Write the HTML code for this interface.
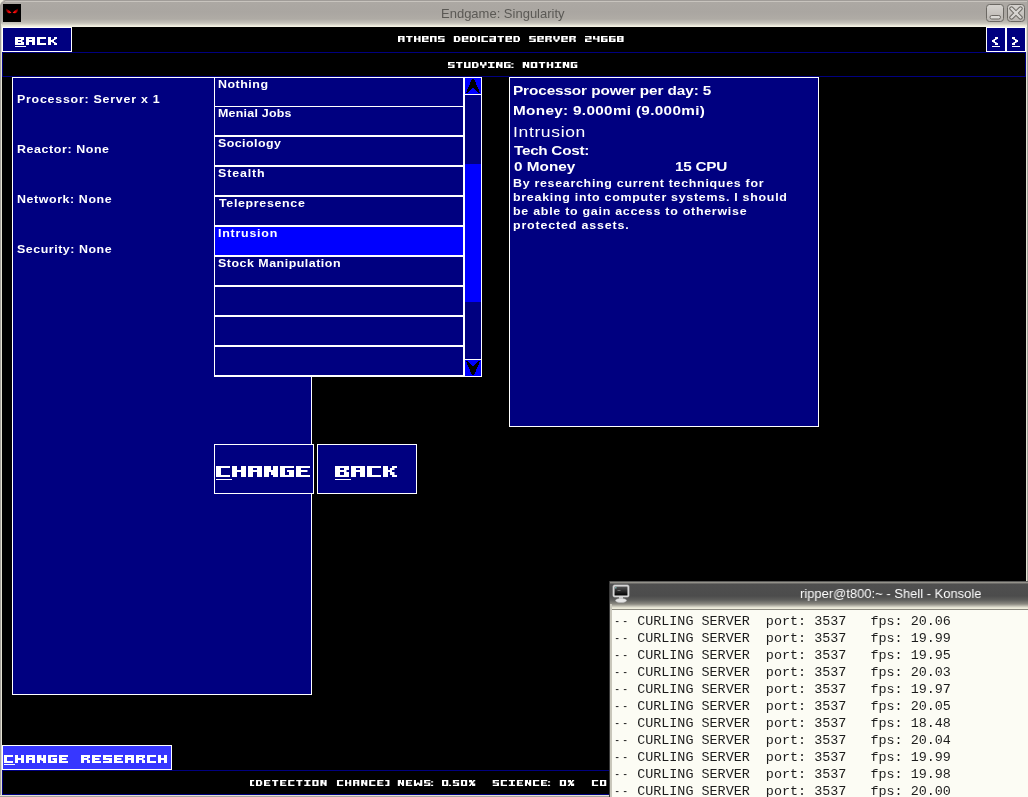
<!DOCTYPE html><html><head><meta charset="utf-8"><style>
html,body{margin:0;padding:0;}
body{width:1028px;height:797px;position:relative;overflow:hidden;background:#000;}
.a{position:absolute;}
.dsh{display:inline-block;transform:scaleX(0.72);}
.t{position:absolute;white-space:pre;line-height:1;transform-origin:0 0;will-change:transform;}
</style></head><body>
<div class="a" style="left:0px;top:0px;width:1028px;height:797px;background:#aba7a1;box-sizing:border-box;"></div>
<div class="a" style="left:0;top:0;width:1028px;height:27px;background:linear-gradient(#aca8a3 2px,#aaa6a1 12px,#afaba5 19px,#c4c1b9 23px,#dfddd0 25px,#f2f0e2 26px,#f2f0e2 27px)"></div>
<div class="a" style="left:0;top:0;width:1028px;height:1px;background:#a09c98"></div>
<div class="a" style="left:0;top:1px;width:1028px;height:1px;background:#c8c4be"></div>
<div class="a" style="left:0;top:0;width:1px;height:797px;background:#a4a19b"></div>
<div class="a" style="left:1px;top:24px;width:1px;height:773px;background:#e4e2d4"></div>
<div class="a" style="left:1026px;top:27px;width:1px;height:770px;background:#e4e2d4"></div>
<div class="a" style="left:1027px;top:0;width:1px;height:797px;background:#a4a19b"></div>
<div class="a" style="left:0;top:795px;width:1028px;height:1px;background:#e4e2d4"></div>
<div class="a" style="left:0;top:796px;width:1028px;height:1px;background:#a4a19b"></div>
<svg class="a" style="left:0;top:0" width="6" height="6" viewBox="0 0 6 6"><path d="M0 0 H5.2 Q1.2 0.8 0 5.2 Z" fill="#f1efe1"/><path d="M5.2 1.1 Q1.6 1.7 1.1 5.5" fill="none" stroke="#a9a59f" stroke-width="1"/></svg>
<svg class="a" style="left:3px;top:4px" width="18" height="18" viewBox="0 0 18 18">
<defs><radialGradient id="eyeL" gradientUnits="userSpaceOnUse" cx="7.2" cy="8.6" r="5.5"><stop offset="0" stop-color="#ff1a1a"/><stop offset="0.35" stop-color="#e00000"/><stop offset="0.75" stop-color="#800000"/><stop offset="1" stop-color="#300000"/></radialGradient>
<radialGradient id="eyeR" gradientUnits="userSpaceOnUse" cx="10.9" cy="8.6" r="5.5"><stop offset="0" stop-color="#ff1a1a"/><stop offset="0.35" stop-color="#e00000"/><stop offset="0.75" stop-color="#800000"/><stop offset="1" stop-color="#300000"/></radialGradient>
<filter id="bl" x="-50%" y="-50%" width="200%" height="200%"><feGaussianBlur stdDeviation="0.45"/></filter></defs>
<rect width="18" height="18" fill="#000"/>
<g filter="url(#bl)">
<path d="M2.9 4.2 C4.6 5.2 7 7.2 8.5 8.6 C7.9 9.4 6 9.4 4.8 8.7 C3.5 7.7 2.9 6.2 2.9 4.2 Z" fill="url(#eyeL)"/>
<path d="M15.2 4.2 C13.5 5.2 11.1 7.2 9.6 8.6 C10.2 9.4 12.1 9.4 13.3 8.7 C14.6 7.7 15.2 6.2 15.2 4.2 Z" fill="url(#eyeR)"/>
</g>
</svg>
<svg class="a" style="left:985px;top:3px" width="42" height="21" viewBox="0 0 42 21">
<defs><linearGradient id="bg" x1="0" y1="0" x2="0" y2="1"><stop offset="0" stop-color="#d6d3cf"/><stop offset="1" stop-color="#b9b5b0"/></linearGradient></defs>
<rect x="1.5" y="1.5" width="17" height="17" rx="3" fill="url(#bg)" stroke="#6b6863" stroke-width="1"/>
<rect x="5" y="12.5" width="10.5" height="3.5" rx="1.7" fill="#dcdad6" stroke="#6b6863" stroke-width="1"/>
<rect x="22.5" y="1.5" width="17" height="17" rx="3" fill="url(#bg)" stroke="#6b6863" stroke-width="1"/>
<path d="M26.5 5.5 L35.5 14.5 M35.5 5.5 L26.5 14.5" stroke="#6b6863" stroke-width="4.4" stroke-linecap="round"/>
<path d="M26.5 5.5 L35.5 14.5 M35.5 5.5 L26.5 14.5" stroke="#d8d6d2" stroke-width="2.4" stroke-linecap="round"/>
</svg>
<div class="a" style="left:2px;top:27px;width:1024px;height:768px;background:#000;box-sizing:border-box;"></div>
<div class="a" style="left:2px;top:27px;width:70px;height:25px;background:#000080;border:1px solid #fff;box-sizing:border-box;"></div>
<div class="a" style="left:2px;top:52px;width:1024px;height:25px;background:#000;border:1px solid #000080;box-sizing:border-box;"></div>
<div class="a" style="left:986px;top:27px;width:20px;height:25px;background:#000080;border:1px solid #fff;box-sizing:border-box;"></div>
<div class="a" style="left:1006px;top:27px;width:20px;height:25px;background:#000080;border:1px solid #fff;box-sizing:border-box;"></div>
<div class="a" style="left:12px;top:77px;width:300px;height:618px;background:#000080;border:1px solid #fff;box-sizing:border-box;"></div>
<div class="a" style="left:509px;top:77px;width:310px;height:350px;background:#000080;border:1px solid #fff;box-sizing:border-box;"></div>
<div class="a" style="left:214px;top:77px;width:250px;height:300px;background:#000080;box-sizing:border-box;"></div>
<div class="a" style="left:215px;top:227px;width:248px;height:28px;background:#0000ff"></div>
<div class="a" style="left:214px;top:77px;width:250px;height:1px;background:#fff"></div>
<div class="a" style="left:214px;top:106px;width:250px;height:1px;background:#fff"></div>
<div class="a" style="left:214px;top:135px;width:250px;height:2px;background:#fff"></div>
<div class="a" style="left:214px;top:165px;width:250px;height:2px;background:#fff"></div>
<div class="a" style="left:214px;top:195px;width:250px;height:2px;background:#fff"></div>
<div class="a" style="left:214px;top:225px;width:250px;height:2px;background:#fff"></div>
<div class="a" style="left:214px;top:255px;width:250px;height:2px;background:#fff"></div>
<div class="a" style="left:214px;top:285px;width:250px;height:2px;background:#fff"></div>
<div class="a" style="left:214px;top:315px;width:250px;height:2px;background:#fff"></div>
<div class="a" style="left:214px;top:345px;width:250px;height:2px;background:#fff"></div>
<div class="a" style="left:214px;top:375px;width:250px;height:2px;background:#fff"></div>
<div class="a" style="left:214px;top:77px;width:1px;height:300px;background:#fff"></div>
<div class="a" style="left:463px;top:77px;width:1px;height:300px;background:#fff"></div>
<div class="a" style="left:464px;top:77px;width:18px;height:300px;background:#000080;border:1px solid #fff;box-sizing:border-box;"></div>
<div class="a" style="left:465px;top:78px;width:16px;height:16px;background:#0000ff"></div>
<div class="a" style="left:465px;top:94px;width:16px;height:1px;background:#fff"></div>
<div class="a" style="left:465px;top:164px;width:16px;height:138px;background:#0000ff"></div>
<div class="a" style="left:465px;top:359px;width:16px;height:1px;background:#fff"></div>
<div class="a" style="left:465px;top:360px;width:16px;height:16px;background:#0000ff"></div>
<svg class="a" style="left:465px;top:78px" width="16" height="16" viewBox="0 0 16 16"><path d="M7 1 L9 1 L15 14.8 L13 14.8 L8 9.7 L3 14.8 L1 14.8 Z" fill="#000" shape-rendering="crispEdges"/></svg>
<svg class="a" style="left:465px;top:360px" width="16" height="16" viewBox="0 0 16 16"><path d="M1 1.2 L3 1.2 L8 6.3 L13 1.2 L15 1.2 L9 15 L7 15 Z" fill="#000" shape-rendering="crispEdges"/></svg>
<div class="a" style="left:214px;top:444px;width:100px;height:50px;background:#000080;border:1px solid #fff;box-sizing:border-box;"></div>
<div class="a" style="left:317px;top:444px;width:100px;height:50px;background:#000080;border:1px solid #fff;box-sizing:border-box;"></div>
<div class="a" style="left:2px;top:745px;width:170px;height:25px;background:#3737ff;border:1px solid #fff;box-sizing:border-box;"></div>
<div class="a" style="left:2px;top:770px;width:1024px;height:25px;background:#000;border:1px solid #000080;box-sizing:border-box;"></div>
<div class="a" style="left:15px;top:46px;width:11px;height:1px;background:#fff"></div>
<div class="a" style="left:992px;top:46px;width:8px;height:1px;background:#fff"></div>
<div class="a" style="left:1012px;top:46px;width:8px;height:1px;background:#fff"></div>
<div class="a" style="left:216px;top:479px;width:16px;height:1px;background:#fff"></div>
<div class="a" style="left:335px;top:479px;width:16px;height:1px;background:#fff"></div>
<div class="a" style="left:4px;top:764px;width:11px;height:1px;background:#fff"></div>
<svg class="a" style="left:0;top:0" width="1028" height="797" viewBox="0 0 1028 797"><path d="M15.00 37.00h9.00v2.00h-9.00zM15.00 39.00h3.00v1.00h-3.00zM21.00 39.00h3.00v1.00h-3.00zM15.00 40.00h7.50v2.00h-7.50zM15.00 42.00h3.00v1.00h-3.00zM21.00 42.00h3.00v1.00h-3.00zM15.00 43.00h9.00v2.00h-9.00zM26.00 37.00h9.00v2.00h-9.00zM26.00 39.00h3.00v1.00h-3.00zM32.00 39.00h3.00v1.00h-3.00zM26.00 40.00h9.00v2.00h-9.00zM26.00 42.00h3.00v1.00h-3.00zM32.00 42.00h3.00v1.00h-3.00zM26.00 43.00h3.00v2.00h-3.00zM32.00 43.00h3.00v2.00h-3.00zM37.00 37.00h9.00v2.00h-9.00zM37.00 39.00h3.00v1.00h-3.00zM37.00 40.00h3.00v2.00h-3.00zM37.00 42.00h3.00v1.00h-3.00zM37.00 43.00h9.00v2.00h-9.00zM48.00 37.00h3.00v2.00h-3.00zM54.00 37.00h3.00v2.00h-3.00zM48.00 39.00h3.00v1.00h-3.00zM52.50 39.00h3.00v1.00h-3.00zM48.00 40.00h6.00v2.00h-6.00zM48.00 42.00h3.00v1.00h-3.00zM52.50 42.00h3.00v1.00h-3.00zM48.00 43.00h3.00v2.00h-3.00zM54.00 43.00h3.00v2.00h-3.00z" fill="#fff"/><path d="M398.00 36.00h6.60v1.20h-6.60zM398.00 37.20h2.20v1.30h-2.20zM402.40 37.20h2.20v1.30h-2.20zM398.00 38.50h6.60v1.00h-6.60zM398.00 39.50h2.20v1.30h-2.20zM402.40 39.50h2.20v1.30h-2.20zM398.00 40.80h2.20v1.20h-2.20zM402.40 40.80h2.20v1.20h-2.20zM406.00 36.00h6.60v1.20h-6.60zM408.20 37.20h2.20v1.30h-2.20zM408.20 38.50h2.20v1.00h-2.20zM408.20 39.50h2.20v1.30h-2.20zM408.20 40.80h2.20v1.20h-2.20zM414.00 36.00h2.20v1.20h-2.20zM418.40 36.00h2.20v1.20h-2.20zM414.00 37.20h2.20v1.30h-2.20zM418.40 37.20h2.20v1.30h-2.20zM414.00 38.50h6.60v1.00h-6.60zM414.00 39.50h2.20v1.30h-2.20zM418.40 39.50h2.20v1.30h-2.20zM414.00 40.80h2.20v1.20h-2.20zM418.40 40.80h2.20v1.20h-2.20zM422.00 36.00h6.60v1.20h-6.60zM422.00 37.20h2.20v1.30h-2.20zM426.40 37.20h2.20v1.30h-2.20zM422.00 38.50h6.60v1.00h-6.60zM422.00 39.50h2.20v1.30h-2.20zM422.00 40.80h6.60v1.20h-6.60zM430.00 36.00h6.60v1.20h-6.60zM430.00 37.20h2.20v1.30h-2.20zM434.40 37.20h2.20v1.30h-2.20zM430.00 38.50h2.20v1.00h-2.20zM434.40 38.50h2.20v1.00h-2.20zM430.00 39.50h2.20v1.30h-2.20zM434.40 39.50h2.20v1.30h-2.20zM430.00 40.80h2.20v1.20h-2.20zM434.40 40.80h2.20v1.20h-2.20zM438.00 36.00h6.60v1.20h-6.60zM438.00 37.20h2.20v1.30h-2.20zM438.00 38.50h6.60v1.00h-6.60zM442.40 39.50h2.20v1.30h-2.20zM438.00 40.80h6.60v1.20h-6.60zM453.80 36.00h5.50v1.20h-5.50zM453.80 37.20h2.20v1.30h-2.20zM458.20 37.20h2.20v1.30h-2.20zM453.80 38.50h2.20v1.00h-2.20zM458.20 38.50h2.20v1.00h-2.20zM453.80 39.50h2.20v1.30h-2.20zM458.20 39.50h2.20v1.30h-2.20zM453.80 40.80h5.50v1.20h-5.50zM461.80 36.00h6.60v1.20h-6.60zM461.80 37.20h2.20v1.30h-2.20zM466.20 37.20h2.20v1.30h-2.20zM461.80 38.50h6.60v1.00h-6.60zM461.80 39.50h2.20v1.30h-2.20zM461.80 40.80h6.60v1.20h-6.60zM469.80 36.00h5.50v1.20h-5.50zM469.80 37.20h2.20v1.30h-2.20zM474.20 37.20h2.20v1.30h-2.20zM469.80 38.50h2.20v1.00h-2.20zM474.20 38.50h2.20v1.00h-2.20zM469.80 39.50h2.20v1.30h-2.20zM474.20 39.50h2.20v1.30h-2.20zM469.80 40.80h5.50v1.20h-5.50zM477.80 36.00h2.20v1.20h-2.20zM477.80 37.20h2.20v1.30h-2.20zM477.80 38.50h2.20v1.00h-2.20zM477.80 39.50h2.20v1.30h-2.20zM477.80 40.80h2.20v1.20h-2.20zM481.40 36.00h6.60v1.20h-6.60zM481.40 37.20h2.20v1.30h-2.20zM481.40 38.50h2.20v1.00h-2.20zM481.40 39.50h2.20v1.30h-2.20zM481.40 40.80h6.60v1.20h-6.60zM489.40 36.00h6.60v1.20h-6.60zM493.80 37.20h2.20v1.30h-2.20zM489.40 38.50h6.60v1.00h-6.60zM489.40 39.50h2.20v1.30h-2.20zM493.80 39.50h2.20v1.30h-2.20zM489.40 40.80h6.60v1.20h-6.60zM497.40 36.00h6.60v1.20h-6.60zM499.60 37.20h2.20v1.30h-2.20zM499.60 38.50h2.20v1.00h-2.20zM499.60 39.50h2.20v1.30h-2.20zM499.60 40.80h2.20v1.20h-2.20zM505.40 36.00h6.60v1.20h-6.60zM505.40 37.20h2.20v1.30h-2.20zM509.80 37.20h2.20v1.30h-2.20zM505.40 38.50h6.60v1.00h-6.60zM505.40 39.50h2.20v1.30h-2.20zM505.40 40.80h6.60v1.20h-6.60zM513.40 36.00h5.50v1.20h-5.50zM513.40 37.20h2.20v1.30h-2.20zM517.80 37.20h2.20v1.30h-2.20zM513.40 38.50h2.20v1.00h-2.20zM517.80 38.50h2.20v1.00h-2.20zM513.40 39.50h2.20v1.30h-2.20zM517.80 39.50h2.20v1.30h-2.20zM513.40 40.80h5.50v1.20h-5.50zM529.20 36.00h6.60v1.20h-6.60zM529.20 37.20h2.20v1.30h-2.20zM529.20 38.50h6.60v1.00h-6.60zM533.60 39.50h2.20v1.30h-2.20zM529.20 40.80h6.60v1.20h-6.60zM537.20 36.00h6.60v1.20h-6.60zM537.20 37.20h2.20v1.30h-2.20zM541.60 37.20h2.20v1.30h-2.20zM537.20 38.50h6.60v1.00h-6.60zM537.20 39.50h2.20v1.30h-2.20zM537.20 40.80h6.60v1.20h-6.60zM545.20 36.00h6.60v1.20h-6.60zM545.20 37.20h2.20v1.30h-2.20zM549.60 37.20h2.20v1.30h-2.20zM545.20 38.50h5.50v1.00h-5.50zM545.20 39.50h2.20v1.30h-2.20zM549.60 39.50h2.20v1.30h-2.20zM545.20 40.80h2.20v1.20h-2.20zM549.60 40.80h2.20v1.20h-2.20zM553.20 36.00h2.20v1.20h-2.20zM557.60 36.00h2.20v1.20h-2.20zM553.20 37.20h2.20v1.30h-2.20zM557.60 37.20h2.20v1.30h-2.20zM553.20 38.50h2.20v1.00h-2.20zM557.60 38.50h2.20v1.00h-2.20zM554.30 39.50h4.40v1.30h-4.40zM555.40 40.80h2.20v1.20h-2.20zM561.20 36.00h6.60v1.20h-6.60zM561.20 37.20h2.20v1.30h-2.20zM565.60 37.20h2.20v1.30h-2.20zM561.20 38.50h6.60v1.00h-6.60zM561.20 39.50h2.20v1.30h-2.20zM561.20 40.80h6.60v1.20h-6.60zM569.20 36.00h6.60v1.20h-6.60zM569.20 37.20h2.20v1.30h-2.20zM573.60 37.20h2.20v1.30h-2.20zM569.20 38.50h5.50v1.00h-5.50zM569.20 39.50h2.20v1.30h-2.20zM573.60 39.50h2.20v1.30h-2.20zM569.20 40.80h2.20v1.20h-2.20zM573.60 40.80h2.20v1.20h-2.20zM585.00 36.00h6.60v1.20h-6.60zM589.40 37.20h2.20v1.30h-2.20zM585.00 38.50h6.60v1.00h-6.60zM585.00 39.50h2.20v1.30h-2.20zM585.00 40.80h6.60v1.20h-6.60zM593.00 36.00h2.20v1.20h-2.20zM597.40 36.00h2.20v1.20h-2.20zM593.00 37.20h2.20v1.30h-2.20zM597.40 37.20h2.20v1.30h-2.20zM593.00 38.50h6.60v1.00h-6.60zM597.40 39.50h2.20v1.30h-2.20zM597.40 40.80h2.20v1.20h-2.20zM601.00 36.00h6.60v1.20h-6.60zM601.00 37.20h2.20v1.30h-2.20zM601.00 38.50h6.60v1.00h-6.60zM601.00 39.50h2.20v1.30h-2.20zM605.40 39.50h2.20v1.30h-2.20zM601.00 40.80h6.60v1.20h-6.60zM609.00 36.00h6.60v1.20h-6.60zM609.00 37.20h2.20v1.30h-2.20zM609.00 38.50h6.60v1.00h-6.60zM609.00 39.50h2.20v1.30h-2.20zM613.40 39.50h2.20v1.30h-2.20zM609.00 40.80h6.60v1.20h-6.60zM617.00 36.00h6.60v1.20h-6.60zM617.00 37.20h2.20v1.30h-2.20zM621.40 37.20h2.20v1.30h-2.20zM617.00 38.50h6.60v1.00h-6.60zM617.00 39.50h2.20v1.30h-2.20zM621.40 39.50h2.20v1.30h-2.20zM617.00 40.80h6.60v1.20h-6.60z" fill="#fff"/><path d="M448.00 62.00h6.60v1.20h-6.60zM448.00 63.20h2.20v1.30h-2.20zM448.00 64.50h6.60v1.00h-6.60zM452.40 65.50h2.20v1.30h-2.20zM448.00 66.80h6.60v1.20h-6.60zM456.00 62.00h6.60v1.20h-6.60zM458.20 63.20h2.20v1.30h-2.20zM458.20 64.50h2.20v1.00h-2.20zM458.20 65.50h2.20v1.30h-2.20zM458.20 66.80h2.20v1.20h-2.20zM464.00 62.00h2.20v1.20h-2.20zM468.40 62.00h2.20v1.20h-2.20zM464.00 63.20h2.20v1.30h-2.20zM468.40 63.20h2.20v1.30h-2.20zM464.00 64.50h2.20v1.00h-2.20zM468.40 64.50h2.20v1.00h-2.20zM464.00 65.50h2.20v1.30h-2.20zM468.40 65.50h2.20v1.30h-2.20zM464.00 66.80h6.60v1.20h-6.60zM472.00 62.00h5.50v1.20h-5.50zM472.00 63.20h2.20v1.30h-2.20zM476.40 63.20h2.20v1.30h-2.20zM472.00 64.50h2.20v1.00h-2.20zM476.40 64.50h2.20v1.00h-2.20zM472.00 65.50h2.20v1.30h-2.20zM476.40 65.50h2.20v1.30h-2.20zM472.00 66.80h5.50v1.20h-5.50zM480.00 62.00h2.20v1.20h-2.20zM484.40 62.00h2.20v1.20h-2.20zM480.00 63.20h2.20v1.30h-2.20zM484.40 63.20h2.20v1.30h-2.20zM480.00 64.50h6.60v1.00h-6.60zM482.20 65.50h2.20v1.30h-2.20zM482.20 66.80h2.20v1.20h-2.20zM488.00 62.00h6.60v1.20h-6.60zM490.20 63.20h2.20v1.30h-2.20zM490.20 64.50h2.20v1.00h-2.20zM490.20 65.50h2.20v1.30h-2.20zM488.00 66.80h6.60v1.20h-6.60zM496.00 62.00h3.30v1.20h-3.30zM500.40 62.00h2.20v1.20h-2.20zM496.00 63.20h3.30v1.30h-3.30zM500.40 63.20h2.20v1.30h-2.20zM496.00 64.50h6.60v1.00h-6.60zM496.00 65.50h2.20v1.30h-2.20zM499.30 65.50h3.30v1.30h-3.30zM496.00 66.80h2.20v1.20h-2.20zM500.40 66.80h2.20v1.20h-2.20zM504.00 62.00h6.60v1.20h-6.60zM504.00 63.20h2.20v1.30h-2.20zM504.00 64.50h2.20v1.00h-2.20zM507.30 64.50h3.30v1.00h-3.30zM504.00 65.50h2.20v1.30h-2.20zM508.40 65.50h2.20v1.30h-2.20zM504.00 66.80h6.60v1.20h-6.60zM511.30 63.20h2.20v1.30h-2.20zM511.30 66.80h2.20v1.20h-2.20zM522.70 62.00h3.30v1.20h-3.30zM527.10 62.00h2.20v1.20h-2.20zM522.70 63.20h3.30v1.30h-3.30zM527.10 63.20h2.20v1.30h-2.20zM522.70 64.50h6.60v1.00h-6.60zM522.70 65.50h2.20v1.30h-2.20zM526.00 65.50h3.30v1.30h-3.30zM522.70 66.80h2.20v1.20h-2.20zM527.10 66.80h2.20v1.20h-2.20zM530.70 62.00h6.60v1.20h-6.60zM530.70 63.20h2.20v1.30h-2.20zM535.10 63.20h2.20v1.30h-2.20zM530.70 64.50h2.20v1.00h-2.20zM535.10 64.50h2.20v1.00h-2.20zM530.70 65.50h2.20v1.30h-2.20zM535.10 65.50h2.20v1.30h-2.20zM530.70 66.80h6.60v1.20h-6.60zM538.70 62.00h6.60v1.20h-6.60zM540.90 63.20h2.20v1.30h-2.20zM540.90 64.50h2.20v1.00h-2.20zM540.90 65.50h2.20v1.30h-2.20zM540.90 66.80h2.20v1.20h-2.20zM546.70 62.00h2.20v1.20h-2.20zM551.10 62.00h2.20v1.20h-2.20zM546.70 63.20h2.20v1.30h-2.20zM551.10 63.20h2.20v1.30h-2.20zM546.70 64.50h6.60v1.00h-6.60zM546.70 65.50h2.20v1.30h-2.20zM551.10 65.50h2.20v1.30h-2.20zM546.70 66.80h2.20v1.20h-2.20zM551.10 66.80h2.20v1.20h-2.20zM554.70 62.00h6.60v1.20h-6.60zM556.90 63.20h2.20v1.30h-2.20zM556.90 64.50h2.20v1.00h-2.20zM556.90 65.50h2.20v1.30h-2.20zM554.70 66.80h6.60v1.20h-6.60zM562.70 62.00h3.30v1.20h-3.30zM567.10 62.00h2.20v1.20h-2.20zM562.70 63.20h3.30v1.30h-3.30zM567.10 63.20h2.20v1.30h-2.20zM562.70 64.50h6.60v1.00h-6.60zM562.70 65.50h2.20v1.30h-2.20zM566.00 65.50h3.30v1.30h-3.30zM562.70 66.80h2.20v1.20h-2.20zM567.10 66.80h2.20v1.20h-2.20zM570.70 62.00h6.60v1.20h-6.60zM570.70 63.20h2.20v1.30h-2.20zM570.70 64.50h2.20v1.00h-2.20zM574.00 64.50h3.30v1.00h-3.30zM570.70 65.50h2.20v1.30h-2.20zM575.10 65.50h2.20v1.30h-2.20zM570.70 66.80h6.60v1.20h-6.60z" fill="#fff"/><path d="M995.00 37.00h3.00v2.00h-3.00zM993.50 39.00h3.00v1.00h-3.00zM992.00 40.00h3.00v2.00h-3.00zM993.50 42.00h3.00v1.00h-3.00zM995.00 43.00h3.00v2.00h-3.00z" fill="#fff"/><path d="M1012.00 37.00h3.00v2.00h-3.00zM1013.50 39.00h3.00v1.00h-3.00zM1015.00 40.00h3.00v2.00h-3.00zM1013.50 42.00h3.00v1.00h-3.00zM1012.00 43.00h3.00v2.00h-3.00z" fill="#fff"/><path d="M216.00 466.00h14.00v2.00h-14.00zM216.00 468.00h5.00v2.00h-5.00zM216.00 470.00h5.00v2.00h-5.00zM216.00 472.00h5.00v3.00h-5.00zM216.00 475.00h14.00v2.00h-14.00zM232.00 466.00h5.00v2.00h-5.00zM241.00 466.00h5.00v2.00h-5.00zM232.00 468.00h5.00v2.00h-5.00zM241.00 468.00h5.00v2.00h-5.00zM232.00 470.00h14.00v2.00h-14.00zM232.00 472.00h5.00v3.00h-5.00zM241.00 472.00h5.00v3.00h-5.00zM232.00 475.00h5.00v2.00h-5.00zM241.00 475.00h5.00v2.00h-5.00zM248.00 466.00h14.00v2.00h-14.00zM248.00 468.00h5.00v2.00h-5.00zM257.00 468.00h5.00v2.00h-5.00zM248.00 470.00h14.00v2.00h-14.00zM248.00 472.00h5.00v3.00h-5.00zM257.00 472.00h5.00v3.00h-5.00zM248.00 475.00h5.00v2.00h-5.00zM257.00 475.00h5.00v2.00h-5.00zM264.00 466.00h7.00v2.00h-7.00zM273.00 466.00h5.00v2.00h-5.00zM264.00 468.00h7.00v2.00h-7.00zM273.00 468.00h5.00v2.00h-5.00zM264.00 470.00h14.00v2.00h-14.00zM264.00 472.00h5.00v3.00h-5.00zM271.00 472.00h7.00v3.00h-7.00zM264.00 475.00h5.00v2.00h-5.00zM273.00 475.00h5.00v2.00h-5.00zM280.00 466.00h14.00v2.00h-14.00zM280.00 468.00h5.00v2.00h-5.00zM280.00 470.00h5.00v2.00h-5.00zM287.00 470.00h7.00v2.00h-7.00zM280.00 472.00h5.00v3.00h-5.00zM289.00 472.00h5.00v3.00h-5.00zM280.00 475.00h14.00v2.00h-14.00zM296.00 466.00h14.00v2.00h-14.00zM296.00 468.00h5.00v2.00h-5.00zM296.00 470.00h11.50v2.00h-11.50zM296.00 472.00h5.00v3.00h-5.00zM296.00 475.00h14.00v2.00h-14.00z" fill="#fff"/><path d="M335.00 466.00h14.00v2.00h-14.00zM335.00 468.00h5.00v2.00h-5.00zM344.00 468.00h5.00v2.00h-5.00zM335.00 470.00h11.50v2.00h-11.50zM335.00 472.00h5.00v3.00h-5.00zM344.00 472.00h5.00v3.00h-5.00zM335.00 475.00h14.00v2.00h-14.00zM351.00 466.00h14.00v2.00h-14.00zM351.00 468.00h5.00v2.00h-5.00zM360.00 468.00h5.00v2.00h-5.00zM351.00 470.00h14.00v2.00h-14.00zM351.00 472.00h5.00v3.00h-5.00zM360.00 472.00h5.00v3.00h-5.00zM351.00 475.00h5.00v2.00h-5.00zM360.00 475.00h5.00v2.00h-5.00zM367.00 466.00h14.00v2.00h-14.00zM367.00 468.00h5.00v2.00h-5.00zM367.00 470.00h5.00v2.00h-5.00zM367.00 472.00h5.00v3.00h-5.00zM367.00 475.00h14.00v2.00h-14.00zM383.00 466.00h5.00v2.00h-5.00zM392.00 466.00h5.00v2.00h-5.00zM383.00 468.00h5.00v2.00h-5.00zM390.00 468.00h4.50v2.00h-4.50zM383.00 470.00h9.00v2.00h-9.00zM383.00 472.00h5.00v3.00h-5.00zM390.00 472.00h4.50v3.00h-4.50zM383.00 475.00h5.00v2.00h-5.00zM392.00 475.00h5.00v2.00h-5.00z" fill="#fff"/><path d="M4.00 755.00h9.00v2.00h-9.00zM4.00 757.00h3.00v1.00h-3.00zM4.00 758.00h3.00v2.00h-3.00zM4.00 760.00h3.00v1.00h-3.00zM4.00 761.00h9.00v2.00h-9.00zM15.00 755.00h3.00v2.00h-3.00zM21.00 755.00h3.00v2.00h-3.00zM15.00 757.00h3.00v1.00h-3.00zM21.00 757.00h3.00v1.00h-3.00zM15.00 758.00h9.00v2.00h-9.00zM15.00 760.00h3.00v1.00h-3.00zM21.00 760.00h3.00v1.00h-3.00zM15.00 761.00h3.00v2.00h-3.00zM21.00 761.00h3.00v2.00h-3.00zM26.00 755.00h9.00v2.00h-9.00zM26.00 757.00h3.00v1.00h-3.00zM32.00 757.00h3.00v1.00h-3.00zM26.00 758.00h9.00v2.00h-9.00zM26.00 760.00h3.00v1.00h-3.00zM32.00 760.00h3.00v1.00h-3.00zM26.00 761.00h3.00v2.00h-3.00zM32.00 761.00h3.00v2.00h-3.00zM37.00 755.00h4.50v2.00h-4.50zM43.00 755.00h3.00v2.00h-3.00zM37.00 757.00h4.50v1.00h-4.50zM43.00 757.00h3.00v1.00h-3.00zM37.00 758.00h9.00v2.00h-9.00zM37.00 760.00h3.00v1.00h-3.00zM41.50 760.00h4.50v1.00h-4.50zM37.00 761.00h3.00v2.00h-3.00zM43.00 761.00h3.00v2.00h-3.00zM48.00 755.00h9.00v2.00h-9.00zM48.00 757.00h3.00v1.00h-3.00zM48.00 758.00h3.00v2.00h-3.00zM52.50 758.00h4.50v2.00h-4.50zM48.00 760.00h3.00v1.00h-3.00zM54.00 760.00h3.00v1.00h-3.00zM48.00 761.00h9.00v2.00h-9.00zM59.00 755.00h9.00v2.00h-9.00zM59.00 757.00h3.00v1.00h-3.00zM59.00 758.00h7.50v2.00h-7.50zM59.00 760.00h3.00v1.00h-3.00zM59.00 761.00h9.00v2.00h-9.00zM81.00 755.00h9.00v2.00h-9.00zM81.00 757.00h3.00v1.00h-3.00zM87.00 757.00h3.00v1.00h-3.00zM81.00 758.00h7.50v2.00h-7.50zM81.00 760.00h3.00v1.00h-3.00zM87.00 760.00h3.00v1.00h-3.00zM81.00 761.00h3.00v2.00h-3.00zM87.00 761.00h3.00v2.00h-3.00zM92.00 755.00h9.00v2.00h-9.00zM92.00 757.00h3.00v1.00h-3.00zM92.00 758.00h7.50v2.00h-7.50zM92.00 760.00h3.00v1.00h-3.00zM92.00 761.00h9.00v2.00h-9.00zM103.00 755.00h9.00v2.00h-9.00zM103.00 757.00h3.00v1.00h-3.00zM103.00 758.00h9.00v2.00h-9.00zM109.00 760.00h3.00v1.00h-3.00zM103.00 761.00h9.00v2.00h-9.00zM114.00 755.00h9.00v2.00h-9.00zM114.00 757.00h3.00v1.00h-3.00zM114.00 758.00h7.50v2.00h-7.50zM114.00 760.00h3.00v1.00h-3.00zM114.00 761.00h9.00v2.00h-9.00zM125.00 755.00h9.00v2.00h-9.00zM125.00 757.00h3.00v1.00h-3.00zM131.00 757.00h3.00v1.00h-3.00zM125.00 758.00h9.00v2.00h-9.00zM125.00 760.00h3.00v1.00h-3.00zM131.00 760.00h3.00v1.00h-3.00zM125.00 761.00h3.00v2.00h-3.00zM131.00 761.00h3.00v2.00h-3.00zM136.00 755.00h9.00v2.00h-9.00zM136.00 757.00h3.00v1.00h-3.00zM142.00 757.00h3.00v1.00h-3.00zM136.00 758.00h7.50v2.00h-7.50zM136.00 760.00h3.00v1.00h-3.00zM142.00 760.00h3.00v1.00h-3.00zM136.00 761.00h3.00v2.00h-3.00zM142.00 761.00h3.00v2.00h-3.00zM147.00 755.00h9.00v2.00h-9.00zM147.00 757.00h3.00v1.00h-3.00zM147.00 758.00h3.00v2.00h-3.00zM147.00 760.00h3.00v1.00h-3.00zM147.00 761.00h9.00v2.00h-9.00zM158.00 755.00h3.00v2.00h-3.00zM164.00 755.00h3.00v2.00h-3.00zM158.00 757.00h3.00v1.00h-3.00zM164.00 757.00h3.00v1.00h-3.00zM158.00 758.00h9.00v2.00h-9.00zM158.00 760.00h3.00v1.00h-3.00zM164.00 760.00h3.00v1.00h-3.00zM158.00 761.00h3.00v2.00h-3.00zM164.00 761.00h3.00v2.00h-3.00z" fill="#fff"/><path d="M250.00 780.00h4.20v1.20h-4.20zM250.00 781.20h2.10v1.30h-2.10zM250.00 782.50h2.10v1.00h-2.10zM250.00 783.50h2.10v1.30h-2.10zM250.00 784.80h4.20v1.20h-4.20zM255.95 780.00h5.25v1.20h-5.25zM255.95 781.20h2.10v1.30h-2.10zM260.15 781.20h2.10v1.30h-2.10zM255.95 782.50h2.10v1.00h-2.10zM260.15 782.50h2.10v1.00h-2.10zM255.95 783.50h2.10v1.30h-2.10zM260.15 783.50h2.10v1.30h-2.10zM255.95 784.80h5.25v1.20h-5.25zM264.00 780.00h6.30v1.20h-6.30zM264.00 781.20h2.10v1.30h-2.10zM264.00 782.50h5.25v1.00h-5.25zM264.00 783.50h2.10v1.30h-2.10zM264.00 784.80h6.30v1.20h-6.30zM272.05 780.00h6.30v1.20h-6.30zM274.15 781.20h2.10v1.30h-2.10zM274.15 782.50h2.10v1.00h-2.10zM274.15 783.50h2.10v1.30h-2.10zM274.15 784.80h2.10v1.20h-2.10zM280.10 780.00h6.30v1.20h-6.30zM280.10 781.20h2.10v1.30h-2.10zM280.10 782.50h5.25v1.00h-5.25zM280.10 783.50h2.10v1.30h-2.10zM280.10 784.80h6.30v1.20h-6.30zM288.15 780.00h6.30v1.20h-6.30zM288.15 781.20h2.10v1.30h-2.10zM288.15 782.50h2.10v1.00h-2.10zM288.15 783.50h2.10v1.30h-2.10zM288.15 784.80h6.30v1.20h-6.30zM296.20 780.00h6.30v1.20h-6.30zM298.30 781.20h2.10v1.30h-2.10zM298.30 782.50h2.10v1.00h-2.10zM298.30 783.50h2.10v1.30h-2.10zM298.30 784.80h2.10v1.20h-2.10zM304.25 780.00h6.30v1.20h-6.30zM306.35 781.20h2.10v1.30h-2.10zM306.35 782.50h2.10v1.00h-2.10zM306.35 783.50h2.10v1.30h-2.10zM304.25 784.80h6.30v1.20h-6.30zM312.30 780.00h6.30v1.20h-6.30zM312.30 781.20h2.10v1.30h-2.10zM316.50 781.20h2.10v1.30h-2.10zM312.30 782.50h2.10v1.00h-2.10zM316.50 782.50h2.10v1.00h-2.10zM312.30 783.50h2.10v1.30h-2.10zM316.50 783.50h2.10v1.30h-2.10zM312.30 784.80h6.30v1.20h-6.30zM320.35 780.00h3.15v1.20h-3.15zM324.55 780.00h2.10v1.20h-2.10zM320.35 781.20h3.15v1.30h-3.15zM324.55 781.20h2.10v1.30h-2.10zM320.35 782.50h6.30v1.00h-6.30zM320.35 783.50h2.10v1.30h-2.10zM323.50 783.50h3.15v1.30h-3.15zM320.35 784.80h2.10v1.20h-2.10zM324.55 784.80h2.10v1.20h-2.10zM336.95 780.00h6.30v1.20h-6.30zM336.95 781.20h2.10v1.30h-2.10zM336.95 782.50h2.10v1.00h-2.10zM336.95 783.50h2.10v1.30h-2.10zM336.95 784.80h6.30v1.20h-6.30zM345.00 780.00h2.10v1.20h-2.10zM349.20 780.00h2.10v1.20h-2.10zM345.00 781.20h2.10v1.30h-2.10zM349.20 781.20h2.10v1.30h-2.10zM345.00 782.50h6.30v1.00h-6.30zM345.00 783.50h2.10v1.30h-2.10zM349.20 783.50h2.10v1.30h-2.10zM345.00 784.80h2.10v1.20h-2.10zM349.20 784.80h2.10v1.20h-2.10zM353.05 780.00h6.30v1.20h-6.30zM353.05 781.20h2.10v1.30h-2.10zM357.25 781.20h2.10v1.30h-2.10zM353.05 782.50h6.30v1.00h-6.30zM353.05 783.50h2.10v1.30h-2.10zM357.25 783.50h2.10v1.30h-2.10zM353.05 784.80h2.10v1.20h-2.10zM357.25 784.80h2.10v1.20h-2.10zM361.10 780.00h3.15v1.20h-3.15zM365.30 780.00h2.10v1.20h-2.10zM361.10 781.20h3.15v1.30h-3.15zM365.30 781.20h2.10v1.30h-2.10zM361.10 782.50h6.30v1.00h-6.30zM361.10 783.50h2.10v1.30h-2.10zM364.25 783.50h3.15v1.30h-3.15zM361.10 784.80h2.10v1.20h-2.10zM365.30 784.80h2.10v1.20h-2.10zM369.15 780.00h6.30v1.20h-6.30zM369.15 781.20h2.10v1.30h-2.10zM369.15 782.50h2.10v1.00h-2.10zM369.15 783.50h2.10v1.30h-2.10zM369.15 784.80h6.30v1.20h-6.30zM377.20 780.00h6.30v1.20h-6.30zM377.20 781.20h2.10v1.30h-2.10zM377.20 782.50h5.25v1.00h-5.25zM377.20 783.50h2.10v1.30h-2.10zM377.20 784.80h6.30v1.20h-6.30zM385.25 780.00h4.20v1.20h-4.20zM387.35 781.20h2.10v1.30h-2.10zM387.35 782.50h2.10v1.00h-2.10zM387.35 783.50h2.10v1.30h-2.10zM385.25 784.80h4.20v1.20h-4.20z" fill="#fff"/><path d="M397.80 780.00h3.15v1.20h-3.15zM402.00 780.00h2.10v1.20h-2.10zM397.80 781.20h3.15v1.30h-3.15zM402.00 781.20h2.10v1.30h-2.10zM397.80 782.50h6.30v1.00h-6.30zM397.80 783.50h2.10v1.30h-2.10zM400.95 783.50h3.15v1.30h-3.15zM397.80 784.80h2.10v1.20h-2.10zM402.00 784.80h2.10v1.20h-2.10zM405.85 780.00h6.30v1.20h-6.30zM405.85 781.20h2.10v1.30h-2.10zM405.85 782.50h5.25v1.00h-5.25zM405.85 783.50h2.10v1.30h-2.10zM405.85 784.80h6.30v1.20h-6.30zM413.90 780.00h2.10v1.20h-2.10zM420.20 780.00h2.10v1.20h-2.10zM413.90 781.20h2.10v1.30h-2.10zM420.20 781.20h2.10v1.30h-2.10zM413.90 782.50h2.10v1.00h-2.10zM417.05 782.50h2.10v1.00h-2.10zM420.20 782.50h2.10v1.00h-2.10zM413.90 783.50h8.40v1.30h-8.40zM413.90 784.80h3.15v1.20h-3.15zM419.15 784.80h3.15v1.20h-3.15zM424.05 780.00h6.30v1.20h-6.30zM424.05 781.20h2.10v1.30h-2.10zM424.05 782.50h6.30v1.00h-6.30zM428.25 783.50h2.10v1.30h-2.10zM424.05 784.80h6.30v1.20h-6.30zM431.05 781.20h2.10v1.30h-2.10zM431.05 784.80h2.10v1.20h-2.10z" fill="#fff"/><path d="M442.00 780.00h6.30v1.20h-6.30zM442.00 781.20h2.10v1.30h-2.10zM446.20 781.20h2.10v1.30h-2.10zM442.00 782.50h2.10v1.00h-2.10zM446.20 782.50h2.10v1.00h-2.10zM442.00 783.50h2.10v1.30h-2.10zM446.20 783.50h2.10v1.30h-2.10zM442.00 784.80h6.30v1.20h-6.30zM449.00 784.80h2.10v1.20h-2.10zM452.85 780.00h6.30v1.20h-6.30zM452.85 781.20h2.10v1.30h-2.10zM452.85 782.50h6.30v1.00h-6.30zM457.05 783.50h2.10v1.30h-2.10zM452.85 784.80h6.30v1.20h-6.30zM460.90 780.00h6.30v1.20h-6.30zM460.90 781.20h2.10v1.30h-2.10zM465.10 781.20h2.10v1.30h-2.10zM460.90 782.50h2.10v1.00h-2.10zM465.10 782.50h2.10v1.00h-2.10zM460.90 783.50h2.10v1.30h-2.10zM465.10 783.50h2.10v1.30h-2.10zM460.90 784.80h6.30v1.20h-6.30zM468.95 780.00h3.15v1.20h-3.15zM473.15 780.00h2.10v1.20h-2.10zM468.95 781.20h5.25v1.30h-5.25zM471.05 782.50h2.10v1.00h-2.10zM470.00 783.50h5.25v1.30h-5.25zM468.95 784.80h2.10v1.20h-2.10zM472.10 784.80h3.15v1.20h-3.15z" fill="#fff"/><path d="M492.70 780.00h6.30v1.20h-6.30zM492.70 781.20h2.10v1.30h-2.10zM492.70 782.50h6.30v1.00h-6.30zM496.90 783.50h2.10v1.30h-2.10zM492.70 784.80h6.30v1.20h-6.30zM500.75 780.00h6.30v1.20h-6.30zM500.75 781.20h2.10v1.30h-2.10zM500.75 782.50h2.10v1.00h-2.10zM500.75 783.50h2.10v1.30h-2.10zM500.75 784.80h6.30v1.20h-6.30zM508.80 780.00h6.30v1.20h-6.30zM510.90 781.20h2.10v1.30h-2.10zM510.90 782.50h2.10v1.00h-2.10zM510.90 783.50h2.10v1.30h-2.10zM508.80 784.80h6.30v1.20h-6.30zM516.85 780.00h6.30v1.20h-6.30zM516.85 781.20h2.10v1.30h-2.10zM516.85 782.50h5.25v1.00h-5.25zM516.85 783.50h2.10v1.30h-2.10zM516.85 784.80h6.30v1.20h-6.30zM524.90 780.00h3.15v1.20h-3.15zM529.10 780.00h2.10v1.20h-2.10zM524.90 781.20h3.15v1.30h-3.15zM529.10 781.20h2.10v1.30h-2.10zM524.90 782.50h6.30v1.00h-6.30zM524.90 783.50h2.10v1.30h-2.10zM528.05 783.50h3.15v1.30h-3.15zM524.90 784.80h2.10v1.20h-2.10zM529.10 784.80h2.10v1.20h-2.10zM532.95 780.00h6.30v1.20h-6.30zM532.95 781.20h2.10v1.30h-2.10zM532.95 782.50h2.10v1.00h-2.10zM532.95 783.50h2.10v1.30h-2.10zM532.95 784.80h6.30v1.20h-6.30zM541.00 780.00h6.30v1.20h-6.30zM541.00 781.20h2.10v1.30h-2.10zM541.00 782.50h5.25v1.00h-5.25zM541.00 783.50h2.10v1.30h-2.10zM541.00 784.80h6.30v1.20h-6.30zM548.00 781.20h2.10v1.30h-2.10zM548.00 784.80h2.10v1.20h-2.10z" fill="#fff"/><path d="M559.80 780.00h6.30v1.20h-6.30zM559.80 781.20h2.10v1.30h-2.10zM564.00 781.20h2.10v1.30h-2.10zM559.80 782.50h2.10v1.00h-2.10zM564.00 782.50h2.10v1.00h-2.10zM559.80 783.50h2.10v1.30h-2.10zM564.00 783.50h2.10v1.30h-2.10zM559.80 784.80h6.30v1.20h-6.30zM567.85 780.00h3.15v1.20h-3.15zM572.05 780.00h2.10v1.20h-2.10zM567.85 781.20h5.25v1.30h-5.25zM569.95 782.50h2.10v1.00h-2.10zM568.90 783.50h5.25v1.30h-5.25zM567.85 784.80h2.10v1.20h-2.10zM571.00 784.80h3.15v1.20h-3.15z" fill="#fff"/><path d="M591.90 780.00h6.30v1.20h-6.30zM591.90 781.20h2.10v1.30h-2.10zM591.90 782.50h2.10v1.00h-2.10zM591.90 783.50h2.10v1.30h-2.10zM591.90 784.80h6.30v1.20h-6.30zM599.95 780.00h6.30v1.20h-6.30zM599.95 781.20h2.10v1.30h-2.10zM604.15 781.20h2.10v1.30h-2.10zM599.95 782.50h2.10v1.00h-2.10zM604.15 782.50h2.10v1.00h-2.10zM599.95 783.50h2.10v1.30h-2.10zM604.15 783.50h2.10v1.30h-2.10zM599.95 784.80h6.30v1.20h-6.30z" fill="#fff"/></svg>
<div class="a" style="left:609px;top:581px;width:419px;height:216px;background:#fcfcf4"></div>
<div class="a" style="left:609px;top:581px;width:419px;height:29px;background:linear-gradient(#5a5a58 0px,#5a5a58 1px,#9c9a92 1px,#8a8882 2px,#4f4f4f 3px,#4c4c4c 15px,#5e5e5c 19px,#8a8880 23px,#d8d6c8 26px,#efeddc 27px,#efeddc 28px,#8c8a80 28px,#8c8a80 29px)"></div>
<div class="a" style="left:609px;top:581px;width:1px;height:216px;background:#3a3a3a"></div>
<div class="a" style="left:610px;top:604px;width:2px;height:193px;background:#c9c7bb"></div>
<svg class="a" style="left:612px;top:584px" width="19" height="20" viewBox="0 0 19 20">
<defs><linearGradient id="scr" x1="0" y1="0" x2="0" y2="1"><stop offset="0" stop-color="#555"/><stop offset="1" stop-color="#000"/></linearGradient></defs>
<rect x="1" y="1" width="16" height="12" rx="1.5" fill="#e8e8e8" stroke="#bdbdbd" stroke-width="0.8"/>
<rect x="2.5" y="2.5" width="13" height="9" fill="url(#scr)"/>
<rect x="3" y="3" width="1.5" height="1.5" fill="#7aa"/>
<rect x="5.5" y="6" width="3" height="0.8" fill="#888"/>
<rect x="7" y="13" width="4" height="2" fill="#d0d0d0"/>
<ellipse cx="9" cy="16.5" rx="5.5" ry="2" fill="#e6e6e6" stroke="#bbb" stroke-width="0.6"/>
</svg>
<div class="t" id="title" style="left:440.87px;top:7.16px;font-size:13px;font-weight:normal;color:#5b5955;font-family:'Liberation Sans',sans-serif;transform:scaleX(0.9972)">Endgame: Singularity</div>
<div class="t" id="lp1" style="left:16.87px;top:94.25px;font-size:11.5px;font-weight:bold;color:#fff;font-family:'Liberation Sans',sans-serif;letter-spacing:0.692px;transform:scaleX(1.0800)">Processor: Server x 1</div>
<div class="t" id="lp2" style="left:16.97px;top:143.87px;font-size:11.5px;font-weight:bold;color:#fff;font-family:'Liberation Sans',sans-serif;letter-spacing:0.551px;transform:scaleX(1.0800)">Reactor: None</div>
<div class="t" id="lp3" style="left:16.97px;top:193.87px;font-size:11.5px;font-weight:bold;color:#fff;font-family:'Liberation Sans',sans-serif;letter-spacing:0.541px;transform:scaleX(1.0800)">Network: None</div>
<div class="t" id="lp4" style="left:16.71px;top:243.87px;font-size:11.5px;font-weight:bold;color:#fff;font-family:'Liberation Sans',sans-serif;letter-spacing:0.497px;transform:scaleX(1.0800)">Security: None</div>
<div class="t" id="li0" style="left:218.48px;top:79.25px;font-size:11.5px;font-weight:bold;color:#fff;font-family:'Liberation Sans',sans-serif;letter-spacing:0.473px;transform:scaleX(1.0800)">Nothing</div>
<div class="t" id="li1" style="left:217.90px;top:108.25px;font-size:11.5px;font-weight:bold;color:#fff;font-family:'Liberation Sans',sans-serif;letter-spacing:0.219px;transform:scaleX(1.0800)">Menial Jobs</div>
<div class="t" id="li2" style="left:218.15px;top:138.19px;font-size:11.5px;font-weight:bold;color:#fff;font-family:'Liberation Sans',sans-serif;letter-spacing:0.415px;transform:scaleX(1.0800)">Sociology</div>
<div class="t" id="li3" style="left:218.05px;top:168.25px;font-size:11.5px;font-weight:bold;color:#fff;font-family:'Liberation Sans',sans-serif;letter-spacing:0.790px;transform:scaleX(1.0800)">Stealth</div>
<div class="t" id="li4" style="left:219.07px;top:198.25px;font-size:11.5px;font-weight:bold;color:#fff;font-family:'Liberation Sans',sans-serif;letter-spacing:0.620px;transform:scaleX(1.0800)">Telepresence</div>
<div class="t" id="li5" style="left:218.25px;top:228.25px;font-size:11.5px;font-weight:bold;color:#fff;font-family:'Liberation Sans',sans-serif;letter-spacing:0.708px;transform:scaleX(1.0800)">Intrusion</div>
<div class="t" id="li6" style="left:218.15px;top:258.25px;font-size:11.5px;font-weight:bold;color:#fff;font-family:'Liberation Sans',sans-serif;letter-spacing:0.471px;transform:scaleX(1.0800)">Stock Manipulation</div>
<div class="t" id="ip1" style="left:512.97px;top:84.11px;font-size:13.3px;font-weight:bold;color:#fff;font-family:'Liberation Sans',sans-serif;letter-spacing:-0.079px;transform:scaleX(1.1500)">Processor power per day: 5</div>
<div class="t" id="ip2" style="left:512.82px;top:104.27px;font-size:13.3px;font-weight:bold;color:#fff;font-family:'Liberation Sans',sans-serif;letter-spacing:0.280px;transform:scaleX(1.1500)">Money: 9.000mi (9.000mi)</div>
<div class="t" id="ip3" style="left:513.13px;top:124.80px;font-size:14.6px;font-weight:normal;color:#fff;font-family:'Liberation Sans',sans-serif;letter-spacing:0.532px;transform:scaleX(1.2000)">Intrusion</div>
<div class="t" id="ip4" style="left:514.23px;top:143.89px;font-size:13.3px;font-weight:bold;color:#fff;font-family:'Liberation Sans',sans-serif;letter-spacing:-0.249px;transform:scaleX(1.1500)">Tech Cost:</div>
<div class="t" id="ip5" style="left:513.51px;top:160.33px;font-size:13.3px;font-weight:bold;color:#fff;font-family:'Liberation Sans',sans-serif;letter-spacing:0.024px;transform:scaleX(1.1500)">0 Money</div>
<div class="t" id="ip6" style="left:674.98px;top:160.33px;font-size:13.3px;font-weight:bold;color:#fff;font-family:'Liberation Sans',sans-serif;letter-spacing:-0.229px;transform:scaleX(1.1500)">15 CPU</div>
<div class="t" id="d0" style="left:513.41px;top:177.83px;font-size:11.5px;font-weight:bold;color:#fff;font-family:'Liberation Sans',sans-serif;letter-spacing:0.656px;transform:scaleX(1.0800)">By researching current techniques for</div>
<div class="t" id="d1" style="left:513.38px;top:191.83px;font-size:11.5px;font-weight:bold;color:#fff;font-family:'Liberation Sans',sans-serif;letter-spacing:0.670px;transform:scaleX(1.0800)">breaking into computer systems. I should</div>
<div class="t" id="d2" style="left:513.38px;top:205.83px;font-size:11.5px;font-weight:bold;color:#fff;font-family:'Liberation Sans',sans-serif;letter-spacing:0.684px;transform:scaleX(1.0800)">be able to gain access to otherwise</div>
<div class="t" id="d3" style="left:512.95px;top:219.74px;font-size:11.5px;font-weight:bold;color:#fff;font-family:'Liberation Sans',sans-serif;letter-spacing:0.789px;transform:scaleX(1.0800)">protected assets.</div>
<div class="t" id="ktitle" style="left:800.13px;top:587.26px;font-size:13.5px;font-weight:normal;color:#ffffff;font-family:'Liberation Sans',sans-serif;transform:scaleX(0.9598)">ripper@t800:~ - Shell - Konsole</div>
<div class="t" id="k0" style="left:613.08px;top:614.62px;font-size:13.41px;font-weight:normal;color:#1c1c1c;font-family:'Liberation Mono',sans-serif;transform:scaleX(1.0000)"><span class="dsh">-</span><span class="dsh">-</span> CURLING SERVER  port: 3537   fps: 20.06</div>
<div class="t" id="k1" style="left:613.08px;top:631.62px;font-size:13.41px;font-weight:normal;color:#1c1c1c;font-family:'Liberation Mono',sans-serif;transform:scaleX(1.0000)"><span class="dsh">-</span><span class="dsh">-</span> CURLING SERVER  port: 3537   fps: 19.99</div>
<div class="t" id="k2" style="left:613.08px;top:648.62px;font-size:13.41px;font-weight:normal;color:#1c1c1c;font-family:'Liberation Mono',sans-serif;transform:scaleX(1.0000)"><span class="dsh">-</span><span class="dsh">-</span> CURLING SERVER  port: 3537   fps: 19.95</div>
<div class="t" id="k3" style="left:613.08px;top:665.62px;font-size:13.41px;font-weight:normal;color:#1c1c1c;font-family:'Liberation Mono',sans-serif;transform:scaleX(1.0000)"><span class="dsh">-</span><span class="dsh">-</span> CURLING SERVER  port: 3537   fps: 20.03</div>
<div class="t" id="k4" style="left:613.08px;top:682.62px;font-size:13.41px;font-weight:normal;color:#1c1c1c;font-family:'Liberation Mono',sans-serif;transform:scaleX(1.0000)"><span class="dsh">-</span><span class="dsh">-</span> CURLING SERVER  port: 3537   fps: 19.97</div>
<div class="t" id="k5" style="left:613.08px;top:699.62px;font-size:13.41px;font-weight:normal;color:#1c1c1c;font-family:'Liberation Mono',sans-serif;transform:scaleX(1.0000)"><span class="dsh">-</span><span class="dsh">-</span> CURLING SERVER  port: 3537   fps: 20.05</div>
<div class="t" id="k6" style="left:613.08px;top:716.62px;font-size:13.41px;font-weight:normal;color:#1c1c1c;font-family:'Liberation Mono',sans-serif;transform:scaleX(1.0000)"><span class="dsh">-</span><span class="dsh">-</span> CURLING SERVER  port: 3537   fps: 18.48</div>
<div class="t" id="k7" style="left:613.08px;top:733.62px;font-size:13.41px;font-weight:normal;color:#1c1c1c;font-family:'Liberation Mono',sans-serif;transform:scaleX(1.0000)"><span class="dsh">-</span><span class="dsh">-</span> CURLING SERVER  port: 3537   fps: 20.04</div>
<div class="t" id="k8" style="left:613.08px;top:750.62px;font-size:13.41px;font-weight:normal;color:#1c1c1c;font-family:'Liberation Mono',sans-serif;transform:scaleX(1.0000)"><span class="dsh">-</span><span class="dsh">-</span> CURLING SERVER  port: 3537   fps: 19.99</div>
<div class="t" id="k9" style="left:613.08px;top:767.62px;font-size:13.41px;font-weight:normal;color:#1c1c1c;font-family:'Liberation Mono',sans-serif;transform:scaleX(1.0000)"><span class="dsh">-</span><span class="dsh">-</span> CURLING SERVER  port: 3537   fps: 19.98</div>
<div class="t" id="k10" style="left:613.08px;top:784.62px;font-size:13.41px;font-weight:normal;color:#1c1c1c;font-family:'Liberation Mono',sans-serif;transform:scaleX(1.0000)"><span class="dsh">-</span><span class="dsh">-</span> CURLING SERVER  port: 3537   fps: 20.00</div>
</body></html>
